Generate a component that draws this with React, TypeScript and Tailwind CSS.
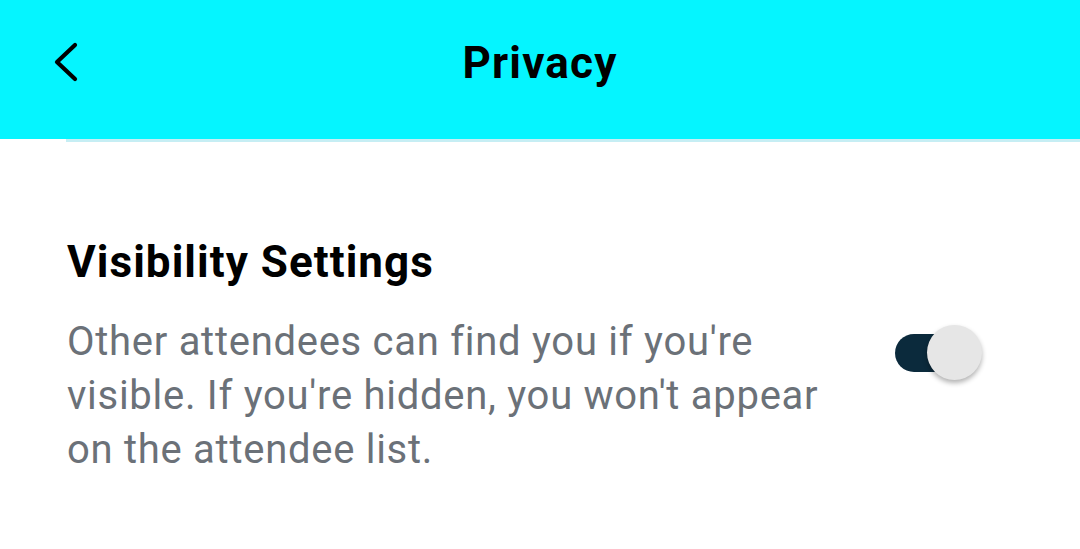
import React from "react";

export default function App() {
  return (
    <div className="w-[1080px] h-[549px] bg-white overflow-hidden" style={{ fontFamily: "Roboto, 'Noto Sans', sans-serif" }}>
      <header className="relative h-[139px] bg-[#05f5ff] flex items-start justify-center pt-[41px]">
        <button className="absolute left-[50px] top-[38px] w-[34px] h-[48px] flex items-center justify-center">
          <svg width="34" height="48" viewBox="0 0 34 48" fill="none">
            <path d="M25 7 L7 24 L25 41" stroke="#000" strokeWidth="4.2" strokeLinecap="round" strokeLinejoin="round" />
          </svg>
        </button>
        <h1 className="text-[44px] font-bold text-black leading-[44px] tracking-[1.2px]">Privacy</h1>
      </header>
      <div className="ml-[66px] h-[3px] bg-[#c6eef4]" />
      <section className="px-[67px] pt-[94px] flex items-start justify-between">
        <div className="w-[790px]">
          <h2 className="text-[44px] font-bold text-black leading-[52px] tracking-[1.05px]">Visibility Settings</h2>
          <p className="mt-[27px] text-[40px] leading-[54px] text-[#6b7178] tracking-[0.72px]">
            Other attendees can find you if you're visible. If you're hidden, you won't appear on the attendee list.
          </p>
        </div>
        <div className="relative mt-[89px] mr-[30px] w-[90px] h-[56px] flex items-center">
          <div className="ml-[2px] w-[70px] h-[38px] rounded-full bg-[#0b2a3c]" />
          <div className="absolute left-[34px] top-0 w-[55px] h-[55px] rounded-full bg-[#e6e6e6] shadow-[0_3px_5px_rgba(0,0,0,0.3)]" />
        </div>
      </section>
    </div>
  );
}
